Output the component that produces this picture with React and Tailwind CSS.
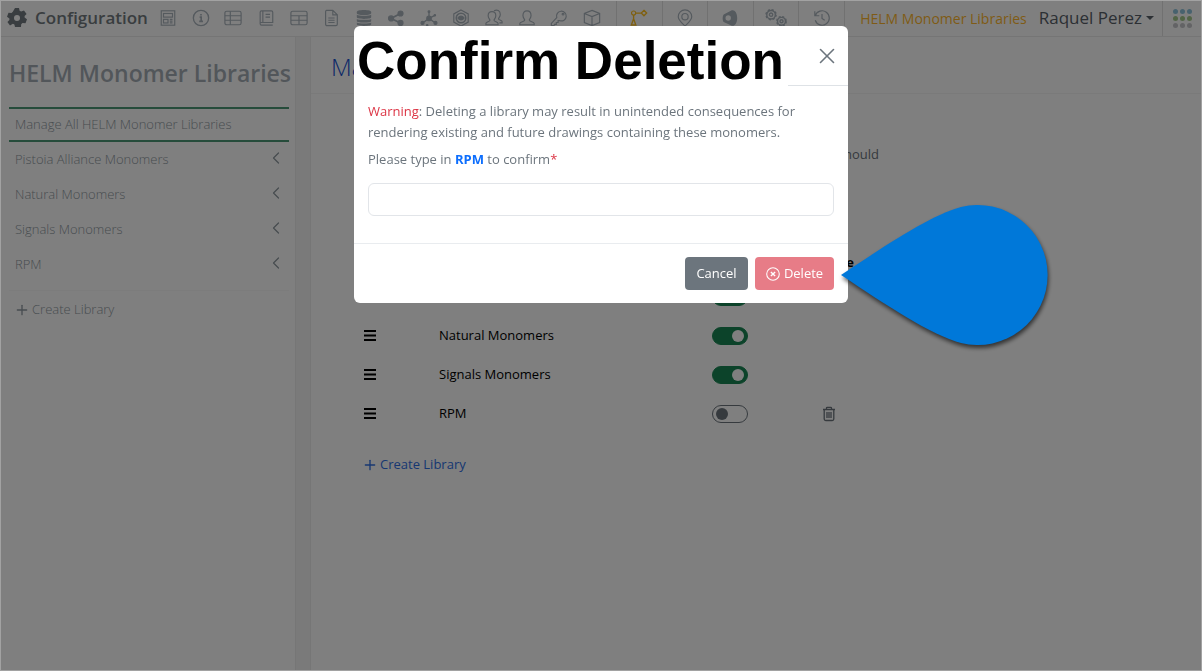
import React, { useState } from 'react';
import { ChevronLeft, Plus, X } from 'lucide-react';

const TOOLBAR_ICONS = [
    { name: 'Forms', shape: <><rect x="2.500" y="2" width="15" height="16" /><rect x="5" y="5" width="10" height="4" /><rect x="5" y="11.500" width="5" height="4" /><path d="M12 11.500h3M12 13.500h3M12 15.500h3" /></> },
    { name: 'Info', shape: <><circle cx="10" cy="10" r="8.500" strokeWidth="1.500" /><path d="M8.500 9h1.700v4.500M8 13.800h4.200M10 5.600v1.600" strokeWidth="1.800" /></> },
    { name: 'Lists', shape: <><rect x="1" y="2.500" width="18" height="15" rx="2" /><path d="M1 7.500h18M1 12.500h18M7 2.500v15" /></> },
    { name: 'Notebook', shape: <><path d="M5 2h11a1.500 1.500 0 0 1 1.500 1.500V15H3.500V3.500A1.500 1.500 0 0 1 5 2zM3.500 15v1.500A1.500 1.500 0 0 0 5 18h12.500M6.500 2v13M9.500 6h5M9.500 9h5" /></> },
    { name: 'Tables', shape: <><rect x="1" y="2.500" width="18" height="15" rx="2" /><path d="M1 7.500h18M1 12.500h18M10 7.500v10" /></> },
    { name: 'Documents', shape: <><path d="M5 1.500h7l5 5V17a1.500 1.500 0 0 1-1.500 1.500h-10A1.500 1.500 0 0 1 4 17V3a1.500 1.500 0 0 1 1-1.500zM12 1.500v5h5M7 10h7M7 12.500h7M7 15h7" /></> },
    { name: 'Data', shape: <g fill="currentColor" stroke="none"><path d="M2 3.500C2 2 5 1.200 10 1.200S18 2 18 3.500v1.200c0 1-3 2-8 2s-8-1-8-2z" /><path d="M2 6.500c2 1.400 14 1.400 16 0v2.700c0 1-3 1.800-8 1.800s-8-.8-8-1.800z" /><path d="M2 11c2 1.400 14 1.400 16 0v2.200c0 1-3 1.800-8 1.800s-8-.8-8-1.800z" /><path d="M2 15c2 1.400 14 1.400 16 0v2c0 1-3 1.800-8 1.800S2 18 2 17z" /></g> },
    { name: 'Sharing', shape: <><g fill="currentColor"><circle cx="4.500" cy="10.500" r="2.800" /><circle cx="15" cy="5" r="2.800" /><circle cx="15" cy="15.500" r="2.800" /></g><path d="M15 5L4.500 10.500 15 15.500" strokeWidth="2" /></> },
    { name: 'Structures', shape: <><g fill="currentColor"><circle cx="10" cy="10.500" r="2.500" /><circle cx="10" cy="3" r="1" /><circle cx="16.500" cy="7" r=".8" /><circle cx="2.800" cy="15.500" r="1.700" /><circle cx="17.200" cy="15.500" r="1.700" /><circle cx="8" cy="18" r=".8" /></g><path d="M10 3v7.500l6.500-3.500M3 15.500l7-5 7 5" strokeWidth="1.500" /></> },
    { name: 'Compounds', shape: <><path d="M10 1l8 4.500v9L10 19l-8-4.500v-9z" /><circle cx="10" cy="10" r="5.300" strokeWidth="1.700" /><path d="M6.500 10c2-3 5-3 7 0-2 3-5 3-7 0z" fill="currentColor" /></> },
    { name: 'Groups', shape: <><path d="M1 17.500v-1.500c0-1.500 4.500-2 4.500-3.500 0-.8-2-2.500-2-5 0-3 1.700-4.500 4.300-4.500s4.200 1.500 4.200 4.500c0 2.500-2 4.200-2 5 0 1.500 4.500 2 4.500 3.500v1.500z" /><path d="M10 2c3.500-2 7 0 7 4 0 2.500-2 4-2 5s4 1.500 4 3v1.500h-3" /></> },
    { name: 'Users', shape: <path d="M2 17.500V16c0-1.800 5.500-2 5.500-3.800 0-.8-2-2-2-5C5.500 4 7 2 10 2s4.500 2 4.500 5.200c0 3-2 4.200-2 5 0 1.800 5.500 2 5.500 3.800v1.500z" /> },
    { name: 'Security', shape: <><path d="M7.500 9.500a5.400 5.400 0 1 1 3.500 3.500L9 13v2H7v2H5l-.5 1.500h-3V16z" /><circle cx="14.500" cy="5.700" r="1" /></> },
    { name: 'Packages', shape: <path d="M10 1.500l8.500 3.500v10L10 18.500 1.500 15V5zM1.500 5L10 8.500 18.500 5M10 8.500v10" /> },
];

const TAB_ICONS = [
    { name: 'Monomers', active: true, shape: <><circle cx="4" cy="4.500" r="2.300" /><path d="M6.300 4.500h6.200M15.500 1.500l3 3-3 3-3-3zM4 6.800v4l-2.500 7h5L4 10.800" strokeWidth="1.500" /></> },
    { name: 'Locations', shape: <><path d="M10 19c-4-4-7.500-7-7.500-10.500a7.500 7.500 0 0 1 15 0C17.500 12 14 15 10 19z" /><circle cx="10" cy="8.500" r="3.500" /></> },
    { name: 'Materials', shape: <path fillRule="evenodd" fill="currentColor" stroke="none" d="M12 1.500c3-1 6 2.500 6 8.500s-3 9.500-6 8.500L3 14.500C1.500 13 1.500 7.500 3 6zM8 7a3 3 0 1 0 0 6 3 3 0 0 0 0-6z" /> },
    { name: 'Services', shape: <><circle cx="5.500" cy="7" r="4.600" strokeWidth="1.300" strokeDasharray="2 1.600" /><circle cx="5.500" cy="7" r="3.900" /><circle cx="5.500" cy="7" r="1.500" /><circle cx="15" cy="13" r="4.300" strokeWidth="1.300" strokeDasharray="2 1.400" /><circle cx="15" cy="13" r="3.600" /><circle cx="15" cy="13" r="1.400" /></> },
    { name: 'History', shape: <path d="M2 2.500v5h5M2.500 7.500a8 8 0 1 1 0 5M10 5.500v5l3 2" /> },
];

const LIBRARIES = [
    { name: 'Pistoia Alliance Monomers', enabled: true },
    { name: 'Natural Monomers', enabled: true },
    { name: 'Signals Monomers', enabled: true },
    { name: 'RPM', enabled: false, removable: true },
];

const DOT_COLORS = ['bg-[#8fc4dc]', 'bg-[#a5c98c]', 'bg-[#c6c6ca]'];

const Icon = ({ children, className = 'w-[18px] h-[18px]' }) => (
    <svg viewBox="0 0 20 20" fill="none" stroke="currentColor" strokeWidth="1.300" className={className} aria-hidden="true">
        {children}
    </svg>
);

const Header = () => (
    <header className="flex h-[37px] shrink-0 items-stretch border-b border-[#eaeaea] text-[#aab4bd]">
        <div className="flex w-[152px] shrink-0 items-center gap-2 pl-[7px] text-[#737b80]">
            <svg viewBox="0 0 20 20" className="h-5 w-5" fill="currentColor" aria-hidden="true">
                <path fillRule="evenodd" d="M8 0h4l.6 2.800 1.500.8L17 2.500l2.600 3.400-2 2v1.700l2.400 1.600-1.500 4-3-.2-1.300 1.300-.2 2.700H8l-.6-2.500-1.500-.8L3 17.500.4 14.100l2-2v-1.700L0 8.800l1.500-4 3 .2L5.800 3.700zM10 7a3 3 0 1 0 0 6 3 3 0 0 0 0-6z" />
            </svg>
            <span className="text-[17px] font-semibold">Configuration</span>
        </div>
        <nav className="grid w-[464px] shrink-0 grid-cols-14 pr-2" aria-label="Configuration pages">
            {TOOLBAR_ICONS.map((icon) => (
                <button key={icon.name} type="button" aria-label={icon.name} className="flex items-center justify-center">
                    <Icon>{icon.shape}</Icon>
                </button>
            ))}
        </nav>
        <nav className="grid w-[229px] shrink-0 grid-cols-5 border-r border-[#e2e2e2]" aria-label="Apps">
            {TAB_ICONS.map((icon) => (
                <button
                    key={icon.name}
                    type="button"
                    aria-label={icon.name}
                    className={`flex items-center justify-center border-l border-[#e2e2e2] ${icon.active ? 'text-[#ffc020]' : ''}`}
                >
                    <Icon className={icon.name === 'Services' ? 'h-[22px] w-[22px]' : 'h-[18px] w-[18px]'}>{icon.shape}</Icon>
                </button>
            ))}
        </nav>
        <div className="flex flex-1 items-center justify-end gap-3 whitespace-nowrap pr-2">
            <a href="#libraries" className="text-[14px] text-[#ffb72c]">HELM Monomer Libraries</a>
            <button type="button" className="flex items-center gap-1 text-[17px] font-medium text-[#586068]">
                Raquel Perez
                <span className="border-x-4 border-t-4 border-x-transparent border-t-[#586068]" />
            </button>
        </div>
        <button type="button" aria-label="App launcher" className="grid w-10 shrink-0 grid-cols-3 content-center justify-center gap-[2px] border-l border-[#e2e2e2] px-[10px]">
            {DOT_COLORS.map((color) => [0, 1, 2].map((i) => (
                <span key={`${color}${i}`} className={`h-[5px] w-[5px] rounded-full ${color}`} />
            )))}
        </button>
    </header>
);

const Sidebar = () => (
    <aside className="w-[295px] shrink-0 border-r border-[#ececec] pl-2 pr-[6px] font-light text-[#8f99a1]">
        <h1 className="pt-[18px] text-[23px] font-semibold leading-[36px] whitespace-nowrap text-[#a4adb5]">HELM Monomer Libraries</h1>
        <a href="#manage" className="mt-4 flex h-[35px] items-center border-y-2 border-[#4d9877] px-[6px]">
            Manage All HELM Monomer Libraries
        </a>
        <ul>
            {LIBRARIES.map((library) => (
                <li key={library.name}>
                    <a href="#library" className="flex h-[35px] items-start justify-between pl-[6px] pr-[3px] pt-[6px]">
                        <span className="leading-[22px]">{library.name}</span>
                        <ChevronLeft className="h-5 w-5" strokeWidth={1.500} />
                    </a>
                </li>
            ))}
        </ul>
        <button type="button" className="mt-2 flex h-[38px] w-full items-center gap-[2px] border-t border-[#f8f8f8] pl-[5px]">
            <Plus className="h-4 w-4" strokeWidth={2} />
            Create Library
        </button>
    </aside>
);

const Toggle = ({ name, checked }) => (
    <input
        type="checkbox"
        role="switch"
        aria-label={`Enable ${name}`}
        defaultChecked={checked}
        className="block h-[18px] w-9 appearance-none rounded-full border border-[#6c757d] bg-transparent before:ml-[3px] before:mt-[2px] before:block before:h-3 before:w-3 before:rounded-full before:bg-[#6c757d] checked:border-[#198754] checked:bg-[#198754] checked:before:ml-[19px] checked:before:bg-white"
    />
);

const LibraryTable = () => (
    <table className="w-[490px] table-fixed text-left text-black">
        <thead>
            <tr className="h-[28px]">
                <th className="w-[75px]" aria-label="Order" />
                <th className="w-[273px]" aria-label="Name" />
                <th className="w-[92px]" aria-label="Enabled" />
                <th className="w-[50px] text-right">Delete</th>
            </tr>
        </thead>
        <tbody>
            {LIBRARIES.map((library) => (
                <tr key={library.name} className="h-[39px]">
                    <td>
                        <svg viewBox="0 0 12 11" className="h-[11px] w-3" stroke="currentColor" strokeWidth="2" aria-hidden="true">
                            <path d="M0 1h12M0 5.500h12M0 10h12" />
                        </svg>
                    </td>
                    <td>{library.name}</td>
                    <td><Toggle name={library.name} checked={library.enabled} /></td>
                    <td>
                        {library.removable && (
                            <button type="button" aria-label={`Delete ${library.name}`} className="mx-auto block text-[#6c757d]">
                                <svg viewBox="0 0 14 16" className="h-4 w-[14px]" fill="none" stroke="currentColor" strokeWidth="1.300" aria-hidden="true">
                                    <path d="M1 3.500h12M4.500 3.500V2q0-.7.7-.7h3.600q.7 0 .7.700v1.500M2.200 3.500v9.500q0 1.500 1.500 1.500h6.600q1.500 0 1.500-1.500V3.500M5 6v6M7 6v6M9 6v6" />
                                </svg>
                            </button>
                        )}
                    </td>
                </tr>
            ))}
        </tbody>
    </table>
);

const Callout = () => (
    <svg
        viewBox="0 0 208 142"
        className="pointer-events-none absolute left-[487px] top-[178px] h-[142px] w-[208px] overflow-visible drop-shadow-[1px_3px_2px_rgba(0,0,0,0.6)]"
        aria-hidden="true"
    >
        <path d="M0 71C45 41 90 11 120 3a70 70 0 1 1 0 136C90 131 45 101 0 71z" fill="#0078d9" />
    </svg>
);

const ConfirmDialog = () => {
    const [value, setValue] = useState('');

    return (
        <div role="dialog" aria-modal="true" aria-labelledby="dialog-title" className="relative w-[494px] self-start rounded-md bg-white text-[#6c757d]">
            <div className="flex h-[60px] items-stretch">
                <h2 id="dialog-title" className="w-[434px] shrink-0 whitespace-nowrap pl-[3px] pt-1 font-['Liberation_Sans',sans-serif] text-[53px] font-bold leading-[62px] text-black">
                    Confirm Deletion
                </h2>
                <div className="flex flex-1 items-center justify-end border-b border-[#dee2e6] pr-2">
                    <button type="button" aria-label="Close">
                        <X className="h-[26px] w-[26px]" strokeWidth={1.500} />
                    </button>
                </div>
            </div>
            <div className="px-[14px] pb-[27px] pt-[15px]">
                <p className="leading-[21px]">
                    <span className="text-[#dc3545]">Warning</span>: Deleting a library may result in unintended consequences for rendering existing and future drawings containing these monomers.
                </p>
                <label htmlFor="confirm-name" className="mt-[6px] block leading-[21px]">
                    Please type in <strong className="text-[#0d6efd]">RPM</strong> to confirm<span className="text-[#dc3545]">*</span>
                </label>
                <input
                    id="confirm-name"
                    type="text"
                    value={value}
                    onChange={(e) => setValue(e.target.value)}
                    className="mt-[13px] block h-[33px] w-full rounded-md border border-[#e2e5e9] px-3"
                />
            </div>
            <div className="flex justify-end gap-[7px] border-t border-[#e9ecef] px-[14px] py-[13px] text-white">
                <button type="button" className="h-[33px] w-[63px] rounded bg-[#6c757d]">Cancel</button>
                <button type="button" className="flex h-[33px] w-[79px] items-center justify-center gap-1 rounded bg-[#e77c87]">
                    <Icon className="h-[14px] w-[14px]"><circle cx="10" cy="10" r="9" strokeWidth="1.500" /><path d="M7 7l6 6M13 7l-6 6" strokeWidth="2" /></Icon>
                    Delete
                </button>
            </div>
            <Callout />
        </div>
    );
};

const App = () => (
    <div className="flex min-h-screen flex-col bg-white font-['Open_Sans',sans-serif] text-[13px]">
        <Header />
        <div className="flex flex-1 bg-[#f4f4f4] pl-px">
            <div className="flex bg-white">
                <Sidebar />
            </div>
            <main className="ml-[14px] flex-1 border-l border-[#ececec] bg-white">
                <h2 className="flex h-[57px] items-center border-b border-[#f4f4f4] pl-5 pt-1 text-[24px] font-light text-[#1450d0]">
                    Manage All HELM Monomer Libraries
                </h2>
                <div className="pl-[53px]">
                    <p className="flex h-[155px] w-[515px] items-start justify-end pt-[50px] leading-[21px] text-[#6c757d]">
                        should
                    </p>
                    <LibraryTable />
                    <button type="button" className="mt-[22px] flex items-center gap-[2px] text-[#2f6fe4]">
                        <Plus className="h-4 w-4 -ml-0.5" strokeWidth={2} />
                        Create Library
                    </button>
                </div>
            </main>
        </div>
        <div className="fixed inset-0 flex justify-center border border-[#a2a2a2] bg-black/50 pt-[25px]">
            <ConfirmDialog />
        </div>
    </div>
);

export default App;
